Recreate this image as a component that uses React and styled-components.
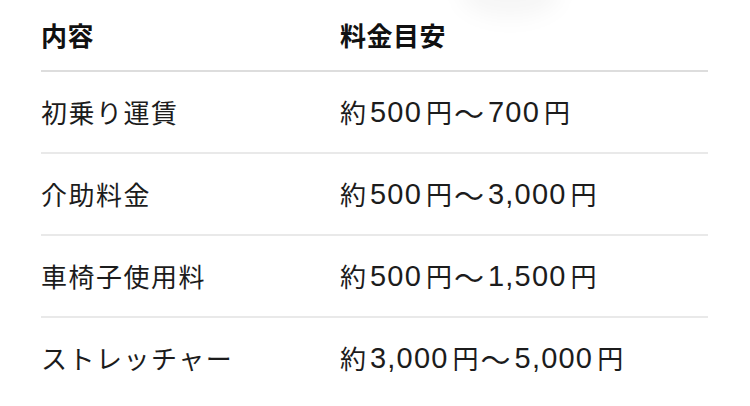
import React from "react";
import styled, { createGlobalStyle } from "styled-components";

const Global = createGlobalStyle`
  html, body { margin: 0; padding: 0; background: #fff; }
  body { font-family: "Noto Sans CJK JP", sans-serif; color: #1c1c1c; }
`;

const Page = styled.div`
  position: relative;
  width: 750px;
  height: 406px;
  overflow: hidden;
  background: #fff;
  padding: 0 42px 0 41px;
  box-sizing: border-box;
`;

const Glow = styled.div`
  position: absolute;
  left: 460px;
  top: -32px;
  width: 100px;
  height: 50px;
  border-radius: 50%;
  background: rgba(0, 0, 0, 0.035);
  filter: blur(10px);
`;

const Table = styled.div`
  display: grid;
  grid-template-columns: 299px 1fr;
`;

const Cell = styled.div`
  display: flex;
  align-items: center;
  height: 80px;
  border-bottom: 2px solid ${(p) => (p.$last ? "transparent" : "#e9e9e9")};
  font-size: 26px;
  line-height: 36px;
  letter-spacing: 1.5px;
  font-weight: 400;
  color: #1c1c1c;
  white-space: nowrap;
`;

const HeadCell = styled(Cell)`
  height: 50px;
  padding: 10px 0;
  border-bottom-color: #dddddd;
  letter-spacing: 0.5px;
  font-weight: 700;
  color: #111;
`;

const PriceCell = styled(Cell)`
  letter-spacing: 0;
`;

const Num = styled.span`
  font-family: "Liberation Sans", sans-serif;
  font-size: 29px;
  letter-spacing: 1.2px;
  margin: 0 4px 0 4px;
`;

const Wave = styled.span`
  font-size: 30px;
  margin: 0 0 0 2px;
`;

const rows = [
  ["初乗り運賃", "約500円〜700円"],
  ["介助料金", "約500円〜3,000円"],
  ["車椅子使用料", "約500円〜1,500円"],
  ["ストレッチャー", "約3,000円〜5,000円"],
];

function Price({ text }) {
  const parts = text.split(/([\d,]+|〜)/).filter(Boolean);
  return parts.map((p, i) =>
    /^[\d,]+$/.test(p) ? (
      <Num key={i}>{p}</Num>
    ) : p === "〜" ? (
      <Wave key={i}>{p}</Wave>
    ) : (
      <React.Fragment key={i}>{p}</React.Fragment>
    )
  );
}

export default function App() {
  return (
    <>
      <Global />
      <Page>
        <Glow />
        <Table>
          <HeadCell>内容</HeadCell>
          <HeadCell>料金目安</HeadCell>
          {rows.map(([a, b], i) => {
            const last = i === rows.length - 1;
            return (
              <React.Fragment key={a}>
                <Cell $last={last}>{a}</Cell>
                <PriceCell $last={last}>
                  <Price text={b} />
                </PriceCell>
              </React.Fragment>
            );
          })}
        </Table>
      </Page>
    </>
  );
}
